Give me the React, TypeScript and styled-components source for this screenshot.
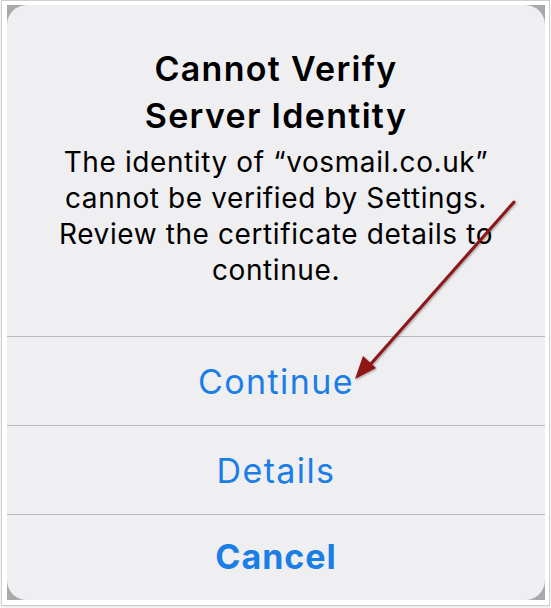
import React from "react";
import styled, { createGlobalStyle } from "styled-components";

const Global = createGlobalStyle`
  html, body { margin: 0; padding: 0; background: #ffffff; }
  body { width: 551px; height: 608px; overflow: hidden; font-family: Inter, "Noto Sans", sans-serif; }
`;

const Frame = styled.div`
  position: relative;
  box-sizing: border-box;
  width: 549px;
  height: 606px;
  margin-left: 1px;
  border: 1px solid #cfcfcf;
  padding: 4px 3px 4px 5px;
  background: #ffffff;
  box-shadow: 0 1px 2px rgba(0, 0, 0, 0.12);
`;

const Backdrop = styled.div`
  width: 538px;
  height: 595px;
  background: #a9a9ab;
`;

const Alert = styled.div`
  width: 100%;
  height: 100%;
  display: flex;
  flex-direction: column;
  background: #efeff1;
  border-radius: 20px;
  overflow: hidden;
`;

const Header = styled.div`
  box-sizing: border-box;
  height: 331px;
  padding: 40px 20px 0;
  display: flex;
  flex-direction: column;
  align-items: center;
  text-align: center;
  color: #000;
`;

const Title = styled.div`
  font-size: 34px;
  font-weight: 600;
  line-height: 47px;
  letter-spacing: 1.3px;
  white-space: nowrap;
`;

const Message = styled.div`
  margin-top: 5px;
  font-size: 28px;
  font-weight: 400;
  line-height: 36px;
  letter-spacing: 0.6px;
  white-space: nowrap;
`;

const Button = styled.div<{ $bold?: boolean; $last?: boolean }>`
  box-sizing: border-box;
  height: ${(p) => (p.$last ? "auto" : "89px")};
  flex: ${(p) => (p.$last ? "1" : "none")};
  border-top: 1px solid #b9b9bd;
  display: flex;
  align-items: center;
  justify-content: center;
  padding-bottom: ${(p) => (p.$last ? "2px" : "0")};
  color: #1a7ee6;
  font-size: 34px;
  font-weight: ${(p) => (p.$bold ? 700 : 400)};
  letter-spacing: ${(p) => (p.$bold ? "1px" : "1.4px")};
`;

const Arrow = styled.svg`
  position: absolute;
  left: -1px;
  top: -1px;
  pointer-events: none;
`;

export default function App() {
  return (
    <>
      <Global />
      <Frame>
        <Backdrop>
          <Alert>
            <Header>
              <Title>
                Cannot Verify
                <br />
                Server Identity
              </Title>
              <Message>
                The identity of “vosmail.co.uk”
                <br />
                cannot be verified by Settings.
                <br />
                Review the certificate details to
                <br />
                continue.
              </Message>
            </Header>
            <Button>Continue</Button>
            <Button>Details</Button>
            <Button $bold $last>
              Cancel
            </Button>
          </Alert>
        </Backdrop>
        <Arrow width="551" height="608" viewBox="0 0 551 608">
          <defs>
            <filter id="sh" x="-20%" y="-20%" width="140%" height="140%">
              <feDropShadow dx="1" dy="1" stdDeviation="1.2" floodColor="#000" floodOpacity="0.35" />
            </filter>
          </defs>
          <g filter="url(#sh)">
            <line x1="513" y1="202" x2="368" y2="366" stroke="#8e1414" strokeWidth="3" strokeLinecap="round" />
            <polygon points="354,379 362,356 375,368" fill="#8e1414" />
          </g>
        </Arrow>
      </Frame>
    </>
  );
}
